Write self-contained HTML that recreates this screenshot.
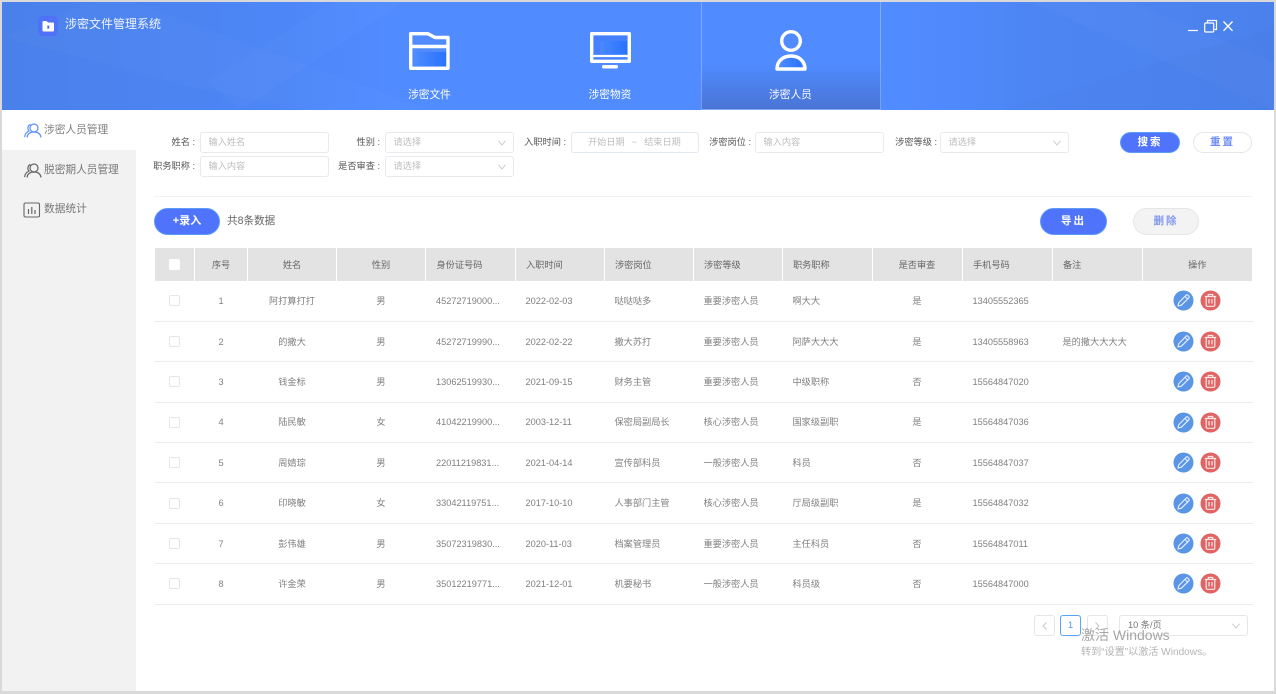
<!DOCTYPE html>
<html lang="zh">
<head>
<meta charset="utf-8">
<title>涉密文件管理系统</title>
<style>
*{box-sizing:border-box}
html,body{margin:0;padding:0}
html{background:#d9d9d9}
body{width:1276px;height:694px;position:relative;overflow:hidden;background:#d9d9d9;font-family:"Liberation Sans","Noto Sans CJK SC",sans-serif;color:#666;filter:blur(.3px)}
.a{position:absolute;white-space:nowrap}
#win{position:absolute;left:2px;top:2px;width:1272px;height:689px;background:#fff}
#hd{position:absolute;left:2px;top:2px;width:1272px;height:108px;background:linear-gradient(90deg,#4a80ea 0%,#4d86f6 22%,#508bff 30%,#508bff 72%,#4d86f4 80%,#4b81ec 100%);overflow:hidden}
#act{position:absolute;left:699px;top:0;width:180px;height:108px;border:1px solid rgba(255,255,255,.28);border-top:0;border-bottom-width:1.5px;background:linear-gradient(180deg,rgba(74,116,212,0) 0,rgba(74,116,212,0) 62px,#4a74d4 108px)}
.nav{position:absolute;top:86px;width:100px;text-align:center;font-size:10.7px;line-height:14px;color:#fff}
#side{position:absolute;left:2px;top:110px;width:134px;height:581px;background:#f2f2f2}
#side .on{position:absolute;left:0;top:0;width:134px;height:39.500px;background:#fff}
.si{position:absolute;left:42px;font-size:10.7px;line-height:14px;color:#777}
.lb{position:absolute;font-size:9.2px;line-height:12px;color:#555;text-align:right}
.ip{position:absolute;height:21px;border:1px solid #e8eaee;border-radius:3px;background:#fff;font-size:9.2px;line-height:19px;color:#bdbdbd;padding-left:7.500px}
.ip svg{position:absolute;right:7.500px;top:7px}
.btn{position:absolute;border-radius:14px;text-align:center;font-size:10.5px;font-weight:bold}
.blue{background:#4f74fb;border:1px solid #5a9cf8;color:#fff}
table{position:absolute;left:154px;top:248px;width:1098px;border-collapse:collapse;table-layout:fixed;font-size:9.2px}
th{height:33px;background:#e3e3e3;border-left:1.5px solid #fff;border-right:1px solid #fff;font-weight:normal;color:#666;padding:0 10px 0 10.500px;text-align:left;line-height:12px}
td{height:40.4px;border-bottom:1px solid #ececec;color:#808080;padding:0 8px 0 10.500px;text-align:left;white-space:nowrap;overflow:hidden;line-height:12px}
.c{text-align:center}
td.c,th.c{padding:0}
.cb{display:block;width:11px;height:11px;border:1px solid #e6e6e6;border-radius:2px;background:#fff;margin:0 auto;position:relative;left:-.5px}
th .cb{border-color:#fff}
.ops{display:flex;justify-content:center;gap:6px;align-items:center;height:20px}
.ops svg{display:block;flex:none}
.pg{position:absolute;top:615px;width:21px;height:21px;border:1px solid #e6e6e6;border-radius:3px;background:#fff;text-align:center;font-size:9.2px;line-height:19px;color:#bbb}
.pg svg{position:absolute;left:7px;top:5.500px}
</style>
</head>
<body>
<svg width="0" height="0" style="position:absolute">
  <defs>
    <linearGradient id="g" x1="0" y1="0" x2="1" y2="0"><stop offset="0" stop-color="#4a8aff"/><stop offset="1" stop-color="#2a72ff"/></linearGradient>
    <symbol id="ed" viewBox="0 0 21 21"><circle cx="10.500" cy="10.500" r="10" fill="#5b96e6"/><path d="M5 16 L5.800 12.600 L13.300 5 Q14 4.400 14.700 5 L16 6.300 Q16.600 7 16 7.700 L8.400 15.200Z M12 6.400 L14.600 9" fill="none" stroke="#e8f0fc" stroke-width="1.100" stroke-linejoin="round"/></symbol>
    <symbol id="dl" viewBox="0 0 21 21"><circle cx="10.500" cy="10.500" r="10" fill="#e06464"/><path d="M4.800 6.500 H16.200 M8.300 6.300 V4.500 H12.700 V6.300 M6.200 6.500 V15 Q6.200 16.300 7.500 16.300 H13.500 Q14.800 16.300 14.800 15 V6.500 M9 9 V13.500 M12 9 V13.500" fill="none" stroke="#fbe6e6" stroke-width="1.200"/></symbol>
    <symbol id="ar" viewBox="0 0 8 6"><path d="M.5 .8 L4 5 L7.500 .8" fill="none" stroke="#c8c8c8" stroke-width=".9"/></symbol>
  </defs>
</svg>
<div id="win"></div>
<div id="hd">
  <svg class="a" style="left:0;top:0" width="1272" height="108" viewBox="0 0 1272 108" fill="none">
    <path d="M0 35 L190 85 L300 108 L430 108 L130 0 L90 0Z" fill="#fff" opacity=".018"/>
    <path d="M205 80 L330 0 L400 0 L240 108Z" fill="#fff" opacity=".02"/>
    <path d="M1030 0 L1272 108 L1272 60 L1130 0Z" fill="#fff" opacity=".025"/>
    <path d="M1000 108 L1272 25 L1272 108Z" fill="#000" opacity=".012"/>
  </svg>
  <div id="act"></div>
  <svg class="a" style="left:36px;top:14px" width="21" height="21" viewBox="0 0 21 21">
    <rect x="0" y="0" width="20" height="20" rx="4.500" fill="#4f72f8"/>
    <path d="M4.500 6 Q4.500 5 5.500 5 H8.500 L10 6.500 H15 Q16 6.500 16 7.500 V14.500 Q16 15.500 15 15.500 H5.500 Q4.500 15.500 4.500 14.500Z" fill="#fff"/>
    <rect x="9.300" y="9.500" width="2" height="3.200" fill="#4f72f8"/>
  </svg>
  <div class="a" style="left:63px;top:14px;font-size:12px;line-height:16px;color:#f0f4ff">涉密文件管理系统</div>

  <svg class="a" style="left:405px;top:28px" width="44" height="44" viewBox="0 0 44 44" fill="none">
    <rect x="10" y="22" width="29" height="14" fill="url(#g)"/>
    <path d="M3.700 3.700 H21 L28 7.500 H41 V38.300 H3.700Z" stroke="#fff" stroke-width="3.400" stroke-linejoin="round"/>
    <path d="M3.700 16.500 H41" stroke="#fff" stroke-width="3.400"/>
  </svg>
  <svg class="a" style="left:586px;top:28px" width="44" height="44" viewBox="0 0 44 44" fill="none">
    <rect x="5" y="5" width="35" height="25" fill="#4480ff"/>
    <rect x="12" y="11" width="27" height="13" fill="url(#g)"/>
    <rect x="3.700" y="3.700" width="37.600" height="27.600" stroke="#fff" stroke-width="3.400" stroke-linejoin="round"/>
    <path d="M4 26 H41" stroke="#fff" stroke-width="2.200"/>
    <rect x="14" y="35" width="16" height="3.500" rx="1.700" fill="#fff"/>
  </svg>
  <svg class="a" style="left:771px;top:28px" width="36" height="44" viewBox="0 0 36 44" fill="none">
    <path d="M8 38 C9 30 15 26.500 22 26.500 C26 30 29 34 29 38Z" fill="url(#g)"/>
    <circle cx="18" cy="11" r="9.300" stroke="#fff" stroke-width="3.400"/>
    <path d="M4 39 C4 31 10 26 18 26 C26 26 32 31 32 39Z" stroke="#fff" stroke-width="3.400" stroke-linejoin="round"/>
  </svg>
  <div class="nav" style="left:377.500px">涉密文件</div>
  <div class="nav" style="left:558px">涉密物资</div>
  <div class="nav" style="left:738.500px">涉密人员</div>

  <svg class="a" style="left:1184px;top:16px" width="54" height="18" viewBox="0 0 54 18" fill="none" stroke="#fff">
    <path d="M2 12.500 H12" stroke-width="1.200"/>
    <rect x="18.700" y="5" width="9" height="9" rx="1" stroke-width="1.200"/>
    <path d="M21.500 4.500 V2.500 H30.500 V11.500 H28.500" stroke-width="1.200"/>
    <path d="M37.500 3.500 L46.500 12.800 M46.500 3.500 L37.500 12.800" stroke-width="1.400"/>
  </svg>
</div>

<div id="side">
  <div class="on"></div>
  <svg class="a" style="left:21px;top:12px" width="20" height="18" viewBox="0 0 20 18" fill="none" stroke="#5b8ff9" stroke-width="1.200">
    <circle cx="11" cy="6" r="4"/><path d="M4 15.500 C4.500 11.500 7.500 10 11 10 C14.500 10 17.500 11.500 18 15.500"/>
    <path d="M7.500 2.500 C5 3 4 7 6 9 C3.500 10 2 12 1.500 15"/>
  </svg>
  <div class="si" style="top:13px;color:#808080">涉密人员管理</div>
  <svg class="a" style="left:21px;top:52px" width="20" height="18" viewBox="0 0 20 18" fill="none" stroke="#666" stroke-width="1.200">
    <circle cx="11" cy="6" r="4"/><path d="M4 15.500 C4.500 11.500 7.500 10 11 10 C14.500 10 17.500 11.500 18 15.500"/>
    <path d="M7.500 2.500 C5 3 4 7 6 9 C3.500 10 2 12 1.500 15"/>
  </svg>
  <div class="si" style="top:53px">脱密期人员管理</div>
  <svg class="a" style="left:21px;top:92px" width="18" height="16" viewBox="0 0 18 16" fill="none" stroke="#666">
    <rect x="1" y="1" width="15.500" height="14" rx="1.500" stroke-width="1.100"/>
    <path d="M5.500 7 V12 M8.800 5 V12 M12 8 V12" stroke-width="1.200"/>
  </svg>
  <div class="si" style="top:92px">数据统计</div>
</div>

<div class="lb" style="left:150px;top:136px;width:45px">姓名 :</div>
<div class="ip" style="left:200px;top:132px;width:129px">输入姓名</div>
<div class="lb" style="left:150px;top:160px;width:45px">职务职称 :</div>
<div class="ip" style="left:200px;top:156px;width:129px">输入内容</div>

<div class="lb" style="left:330px;top:136px;width:50px">性别 :</div>
<div class="ip" style="left:385px;top:132px;width:129px">请选择<svg width="8" height="6"><use href="#ar"/></svg></div>
<div class="lb" style="left:330px;top:160px;width:50px">是否审查 :</div>
<div class="ip" style="left:385px;top:156px;width:129px">请选择<svg width="8" height="6"><use href="#ar"/></svg></div>

<div class="lb" style="left:520px;top:136px;width:46px">入职时间 :</div>
<div class="ip" style="left:571px;top:132px;width:128px;padding-left:16px;border-color:#e2e8ef">开始日期<span style="margin:0 7px">~</span>结束日期</div>
<div class="lb" style="left:705px;top:136px;width:46px">涉密岗位 :</div>
<div class="ip" style="left:755px;top:132px;width:129px">输入内容</div>
<div class="lb" style="left:891px;top:136px;width:46px">涉密等级 :</div>
<div class="ip" style="left:940px;top:132px;width:129px">请选择<svg width="8" height="6"><use href="#ar"/></svg></div>

<div class="btn blue" style="left:1120px;top:132px;width:60px;height:21px;line-height:19px;letter-spacing:2px">搜索</div>
<div class="btn" style="left:1193px;top:132px;width:59px;height:21px;line-height:19px;letter-spacing:2px;background:#fff;border:1px solid #e6e6e6;color:#6f8df5">重置</div>

<div class="a" style="left:154px;top:196px;width:1098px;height:1px;background:#f2f2f2"></div>

<div class="btn blue" style="left:154px;top:208px;width:66px;height:27px;line-height:25px;font-size:11px">+录入</div>
<div class="a" style="left:227px;top:215px;font-size:10.600px;line-height:13px;color:#666">共8条数据</div>
<div class="btn blue" style="left:1040px;top:208px;width:67px;height:27px;line-height:25px;letter-spacing:2px">导出</div>
<div class="btn" style="left:1133px;top:208px;width:66px;height:27px;line-height:25px;letter-spacing:2px;background:#f3f3f3;border:1px solid #e6e6e6;color:#7f97ee">删除</div>

<table>
<colgroup><col style="width:40px"><col style="width:53px"><col style="width:89px"><col style="width:89px"><col style="width:89.500px"><col style="width:89px"><col style="width:89px"><col style="width:89px"><col style="width:90px"><col style="width:90px"><col style="width:90px"><col style="width:90px"><col style="width:110.500px"></colgroup>
<tr><th class="c"><span class="cb"></span></th><th class="c">序号</th><th class="c">姓名</th><th class="c">性别</th><th>身份证号码</th><th>入职时间</th><th>涉密岗位</th><th>涉密等级</th><th>职务职称</th><th class="c">是否审查</th><th>手机号码</th><th>备注</th><th class="c">操作</th></tr>
<tr><td class="c"><span class="cb"></span></td><td class="c">1</td><td class="c">阿打算打打</td><td class="c">男</td><td>45272719000...</td><td>2022-02-03</td><td>哒哒哒多</td><td>重要涉密人员</td><td>啊大大</td><td class="c">是</td><td>13405552365</td><td></td><td class="c"><div class="ops"><svg width="21" height="21"><use href="#ed"/></svg><svg width="21" height="21"><use href="#dl"/></svg></div></td></tr>
<tr><td class="c"><span class="cb"></span></td><td class="c">2</td><td class="c">的撒大</td><td class="c">男</td><td>45272719990...</td><td>2022-02-22</td><td>撒大苏打</td><td>重要涉密人员</td><td>阿萨大大大</td><td class="c">是</td><td>13405558963</td><td>是的撒大大大大</td><td class="c"><div class="ops"><svg width="21" height="21"><use href="#ed"/></svg><svg width="21" height="21"><use href="#dl"/></svg></div></td></tr>
<tr><td class="c"><span class="cb"></span></td><td class="c">3</td><td class="c">钱金标</td><td class="c">男</td><td>13062519930...</td><td>2021-09-15</td><td>财务主管</td><td>重要涉密人员</td><td>中级职称</td><td class="c">否</td><td>15564847020</td><td></td><td class="c"><div class="ops"><svg width="21" height="21"><use href="#ed"/></svg><svg width="21" height="21"><use href="#dl"/></svg></div></td></tr>
<tr><td class="c"><span class="cb"></span></td><td class="c">4</td><td class="c">陆民敏</td><td class="c">女</td><td>41042219900...</td><td>2003-12-11</td><td>保密局副局长</td><td>核心涉密人员</td><td>国家级副职</td><td class="c">是</td><td>15564847036</td><td></td><td class="c"><div class="ops"><svg width="21" height="21"><use href="#ed"/></svg><svg width="21" height="21"><use href="#dl"/></svg></div></td></tr>
<tr><td class="c"><span class="cb"></span></td><td class="c">5</td><td class="c">周婧琮</td><td class="c">男</td><td>22011219831...</td><td>2021-04-14</td><td>宣传部科员</td><td>一般涉密人员</td><td>科员</td><td class="c">否</td><td>15564847037</td><td></td><td class="c"><div class="ops"><svg width="21" height="21"><use href="#ed"/></svg><svg width="21" height="21"><use href="#dl"/></svg></div></td></tr>
<tr><td class="c"><span class="cb"></span></td><td class="c">6</td><td class="c">印晓敏</td><td class="c">女</td><td>33042119751...</td><td>2017-10-10</td><td>人事部门主管</td><td>核心涉密人员</td><td>厅局级副职</td><td class="c">是</td><td>15564847032</td><td></td><td class="c"><div class="ops"><svg width="21" height="21"><use href="#ed"/></svg><svg width="21" height="21"><use href="#dl"/></svg></div></td></tr>
<tr><td class="c"><span class="cb"></span></td><td class="c">7</td><td class="c">彭伟雄</td><td class="c">男</td><td>35072319830...</td><td>2020-11-03</td><td>档案管理员</td><td>重要涉密人员</td><td>主任科员</td><td class="c">否</td><td>15564847011</td><td></td><td class="c"><div class="ops"><svg width="21" height="21"><use href="#ed"/></svg><svg width="21" height="21"><use href="#dl"/></svg></div></td></tr>
<tr><td class="c"><span class="cb"></span></td><td class="c">8</td><td class="c">许金荣</td><td class="c">男</td><td>35012219771...</td><td>2021-12-01</td><td>机要秘书</td><td>一般涉密人员</td><td>科员级</td><td class="c">否</td><td>15564847000</td><td></td><td class="c"><div class="ops"><svg width="21" height="21"><use href="#ed"/></svg><svg width="21" height="21"><use href="#dl"/></svg></div></td></tr>
</table>

<div class="pg" style="left:1034px"><svg width="5" height="8" viewBox="0 0 5 8" fill="none" stroke="#c6c6c6"><path d="M4.500 .5 L1 4 L4.500 7.500"/></svg></div>
<div class="pg" style="left:1060px;border-color:#5aa5f5;color:#4a97f0">1</div>
<div class="pg" style="left:1087px"><svg width="5" height="8" viewBox="0 0 5 8" fill="none" stroke="#c6c6c6"><path d="M.5 .5 L4 4 L.5 7.500"/></svg></div>
<div class="ip" style="left:1119px;top:615px;width:129px;color:#777;border-color:#e6e6e6;padding-left:8px">10 条/页<svg width="8" height="6"><use href="#ar"/></svg></div>

<div class="a" style="left:1081px;top:627px;font-size:14px;line-height:17px;color:rgba(120,120,120,.65)">激活 Windows</div>
<div class="a" style="left:1081px;top:646px;font-size:10.100px;line-height:14px;color:rgba(140,140,140,.65)">转到“设置”以激活 Windows。</div>
</body>
</html>
